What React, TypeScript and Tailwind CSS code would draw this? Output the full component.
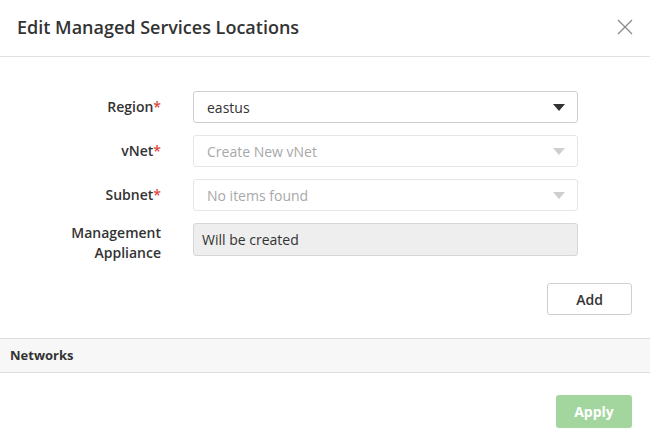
import React from "react";

const Caret = ({ light }: { light?: boolean }) => (
  <svg width="12" height="7" viewBox="0 0 12 7" className="shrink-0">
    <path d="M0 0 L12 0 L6 7 Z" fill={light ? "#cfcfcf" : "#333333"} />
  </svg>
);

function Row({ label, children, required = true, top = false }: { label: React.ReactNode; children: React.ReactNode; required?: boolean; top?: boolean }) {
  return (
    <div className={top ? "flex items-start" : "flex items-center"}>
      <div className="w-[161px] text-right text-[14px] font-semibold text-[#333] leading-[20px]">
        {label}
        {required && <span className="text-[#e0463e]">*</span>}
      </div>
      <div className="ml-[32px] w-[385px]">{children}</div>
    </div>
  );
}

export default function App() {
  return (
    <div className="w-[650px] h-[441px] bg-white relative overflow-hidden" style={{ fontFamily: '"Open Sans", sans-serif' }}>
      <div className="h-[57px] border-b border-[#e0e0e0] flex items-center justify-between pl-[17px] pr-[17px]">
        <div className="text-[18px] font-semibold text-[#333] leading-[24px] -mt-[2px]">Edit Managed Services Locations</div>
        <svg width="16" height="16" viewBox="0 0 16 16" className="-mt-[3px]">
          <path d="M1 1 L15 15 M15 1 L1 15" stroke="#8a8a8a" strokeWidth="1.3" />
        </svg>
      </div>
      <div className="pt-[34px] flex flex-col gap-[12px]">
        <Row label="Region">
          <div className="h-[32px] border border-[#cfcfcf] rounded-[3px] flex items-center justify-between pl-[13px] pr-[12px] text-[14px] text-[#333]">
            <span>eastus</span>
            <Caret />
          </div>
        </Row>
        <Row label="vNet">
          <div className="h-[32px] border border-[#e6e6e6] rounded-[3px] flex items-center justify-between pl-[13px] pr-[12px] text-[14px] text-[#a8a8a8]">
            <span>Create New vNet</span>
            <Caret light />
          </div>
        </Row>
        <Row label="Subnet">
          <div className="h-[32px] border border-[#e6e6e6] rounded-[3px] flex items-center justify-between pl-[13px] pr-[12px] text-[14px] text-[#a8a8a8]">
            <span>No items found</span>
            <Caret light />
          </div>
        </Row>
        <Row label={<>Management<br />Appliance</>} required={false} top>
          <div className="h-[33px] border border-[#d6d6d6] bg-[#eeeeee] rounded-[3px] flex items-center pl-[8px] text-[14px] text-[#333]">
            <span>Will be created</span>
          </div>
        </Row>
      </div>
      <div className="flex justify-end pr-[18px] mt-[20px]">
        <button className="w-[85px] h-[32px] border border-[#cfcfcf] rounded-[3px] bg-white text-[14px] font-semibold text-[#333]">Add</button>
      </div>
      <div className="mt-[23px] h-[35px] bg-[#f7f7f7] border-y border-[#dedede] flex items-center pl-[10px] text-[13px] font-bold text-[#333]">
        Networks
      </div>
      <div className="flex justify-end pr-[18px] mt-[22px]">
        <button className="w-[76px] h-[33px] rounded-[3px] bg-[#a2d69e] text-[14px] font-bold text-white">Apply</button>
      </div>
    </div>
  );
}
